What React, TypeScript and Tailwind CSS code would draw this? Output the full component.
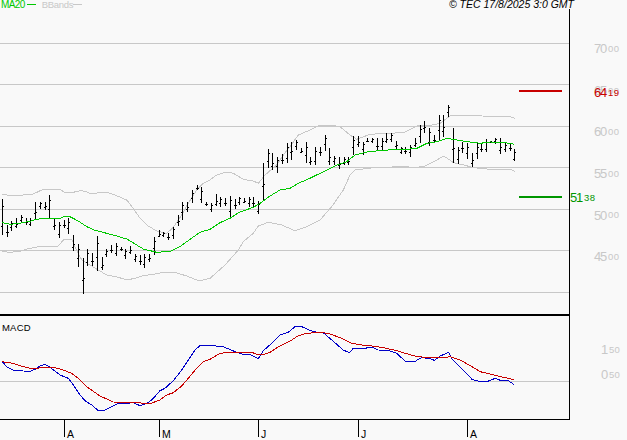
import React from "react";

type Pt = [number, number];

// all chart points were read off 3x crops, so they are stored as crop coords
const fromCrop = (ox: number, oy: number, pts: Pt[]): Pt[] =>
  pts.map(([x, y]) => [ox + x / 3, oy + y / 3]);

const toLine = (pts: Pt[]) => pts.map(([x, y]) => `${x.toFixed(1)},${y.toFixed(1)}`).join(" ");

const MAIN_TOP = 9;
const MACD_TOP = 316;

const gridYs = [43, 84, 126, 167, 209, 250, 292];

const ma20: Pt[] = [
  ...fromCrop(0, 150, [[7,218],[30,223],[60,220],[90,214],[110,208],[130,205],[180,205],[195,199],[210,200],[235,213],[260,230],[285,241],[320,250],[350,258],[380,267],[410,285],[430,297],[470,307],[510,304],[540,290],[570,268],[600,247],[630,238]]),
  ...fromCrop(210, 100, [[30,368],[60,355],[85,338],[130,322],[150,310],[180,288],[210,270],[240,265],[265,250],[300,235],[340,215],[380,195],[410,185],[435,165],[475,155],[510,152],[570,147],[600,147]]),
  ...fromCrop(417, 100, [[0,145],[30,130],[60,125],[90,115],[120,120],[150,125],[190,130],[220,126],[260,127],[292,133]]),
];

const upperBand: Pt[] = [
  ...fromCrop(0, 150, [[7,133],[40,138],[70,135],[100,132],[125,120],[150,118],[180,118],[195,128],[215,128],[240,122],[255,124],[275,132],[295,128],[325,128],[345,135],[380,150],[400,175],[420,205],[445,228],[470,243],[500,250],[520,232],[545,195],[565,160],[590,120],[610,100],[630,90]]),
  ...fromCrop(210, 100, [[20,225],[50,216],[70,220],[100,238],[130,243],[145,250],[165,225],[200,195],[220,165],[240,140],[265,105],[300,90],[330,75],[360,75],[390,80],[420,105],[440,118],[480,103],[530,100],[580,98]]),
  ...fromCrop(417, 100, [[0,78],[45,75],[70,70],[100,47],[150,47],[175,45],[195,48],[280,50],[293,55]]),
];

const lowerBand: Pt[] = [
  ...fromCrop(0, 150, [[0,302],[25,307],[55,305],[85,296],[115,290],[175,288],[190,270],[215,268],[225,290],[245,330],[270,345],[295,360],[320,375],[355,382],[380,390],[405,385],[430,377],[465,372],[490,367],[525,367],[560,378],[590,390],[610,390],[630,385]]),
  ...fromCrop(210, 100, [[45,495],[85,450],[100,425],[130,400],[145,378],[175,367],[215,375],[255,392],[290,380],[330,360],[365,320],[400,270],[420,225],[435,210],[490,203],[570,200]]),
  ...fromCrop(417, 100, [[0,202],[25,198],[50,185],[80,168],[110,188],[140,195],[170,203],[220,208],[280,208],[293,214]]),
];

const macdBlue: Pt[] = [
  ...fromCrop(0, 310, [[7,155],[20,170],[40,180],[70,183],[90,184],[105,178],[120,168],[135,163],[150,172],[165,183],[180,195],[205,205],[220,225],[240,255],[255,272],[275,285],[295,302],[310,303],[330,293],[350,282],[380,280],[400,278],[420,287],[445,278],[460,265],[480,242],[495,235],[520,212],[545,180],[565,150],[585,120],[600,107],[630,107]]),
  ...fromCrop(210, 310, [[35,109],[55,116],[75,125],[100,133],[120,133],[145,146],[160,122],[185,100],[210,75],[235,67],[255,50],[275,50],[310,65],[340,68],[365,90],[400,120],[418,128],[430,115],[465,115],[485,111],[505,120],[535,121],[560,130],[585,153],[615,155]]),
  ...fromCrop(417, 310, [[0,150],[15,143],[35,145],[52,151],[70,138],[95,127],[105,148],[130,172],[165,208],[185,214],[212,214],[235,205],[250,211],[272,211],[292,224]]),
];

const macdRed: Pt[] = [
  ...fromCrop(0, 310, [[7,155],[40,160],[70,170],[100,177],[130,172],[160,172],[190,180],[215,190],[235,205],[260,230],[300,258],[340,276],[410,278],[450,281],[480,270],[500,255],[520,248],[545,228],[565,205],[590,175],[610,155],[630,148]]),
  ...fromCrop(210, 310, [[30,130],[60,127],[125,127],[140,133],[165,132],[180,127],[205,110],[245,90],[265,77],[285,71],[320,67],[355,70],[390,83],[425,100],[455,105],[480,107],[520,113],[560,122],[590,131]]),
  ...fromCrop(417, 310, [[0,140],[30,142],[85,142],[100,140],[130,150],[165,170],[190,185],[230,195],[260,202],[292,209]]),
];

// high / low of each daily bar, in crop coords, one list per crop
const barsA: Pt[] = [[148,255],[225,262],[213,242],[205,235],[196,220],[205,225],[205,228],[155,210],[155,177],[155,178],[135,205],[205,242],[215,263],[210,235],[205,253],[255,302],[282,350],[325,433],[298,350],[310,350],[257,362],[322,362],[297,322],[285,310],[280,318],[290,302],[297,327],[288,312],[312,335],[315,345],[312,353],[312,335],[262,315],[240,262],[245,260],[250,270],[230,265],[195,228],[155,208],[155,185],[120,160],[105,120],[112,160],[155,168]];
const barsB: Pt[] = [[310,338],[283,320],[290,320],[295,318],[287,350],[298,328],[290,315],[295,310],[292,322],[290,322],[303,342],[190,302],[148,205],[160,210],[170,218],[163,192],[128,188],[125,178],[120,150],[145,160],[127,190],[170,195],[142,197],[140,168],[105,152],[143,195],[168,195],[172,208],[172,195],[170,195],[108,165],[108,140],[125,163],[115,128],[113,128],[115,155],[115,155],[100,130],[100,128],[123,147],[140,160],[142,162],[135,170]];
const barsC: Pt[] = [[115,143],[75,130],[62,98],[85,140],[105,130],[45,120],[45,110],[15,50],[85,190],[140,190],[125,158],[130,178],[158,200],[130,178],[133,158],[118,158],[123,130],[113,130],[115,163],[130,158],[130,155],[148,185]];

const bars = [
  ...barsA.map(([h, l]) => [150 + h / 3, 150 + l / 3]),
  ...barsB.map(([h, l]) => [100 + h / 3, 100 + l / 3]),
  ...barsC.map(([h, l]) => [100 + h / 3, 100 + l / 3]),
];

const ticks = [
  { x: 64, label: "A" },
  { x: 159, label: "M" },
  { x: 258, label: "J" },
  { x: 358, label: "J" },
  { x: 467, label: "A" },
];

const PriceLabel = ({ big, small, className = "text-[#c8c8c8]" }: { big: string; small: string; className?: string }) => (
  <span className={`flex items-center leading-none ${className}`}>
    <span className="text-[13px] leading-none tracking-[-1.2px]">{big}</span>
    <span className="ml-[2px] text-[9.5px] leading-none tracking-[0.3px]">{small}</span>
  </span>
);

export default function App() {
  return (
    <div
      className="relative flex h-[440px] w-[627px] flex-col overflow-hidden bg-[#f9f9f9]"
      style={{ fontFamily: '"Liberation Sans", Arial, sans-serif' }}
    >
      {/* legend + copyright row */}
      <div className="flex h-[9px] w-[574px] items-center text-[10px] leading-[9px]">
        <span className="ml-px tracking-[-0.6px] text-[#00c800]">MA20</span>
        <span className="ml-[2px] h-px w-[9px] bg-[#00c800]" />
        <span className="ml-[6px] text-[9.5px] tracking-[-0.3px] text-[#c8c8c8]">BBands</span>
        <span className="h-px w-[9px] bg-[#c8c8c8]" />
        <span className="ml-auto whitespace-nowrap text-[10.5px] italic text-black">© TEC 17/8/2025 3:0 GMT</span>
      </div>

      {/* price panel */}
      <div className="relative flex h-[305px]">
        <div className="w-[570px] border-r border-black">
          <svg width="569" height="305" viewBox={`0 ${MAIN_TOP} 569 305`} className="block">
            {gridYs.map((y) => (
              <rect key={y} x="0" y={y} width="569" height="1" fill="#c8c8c8" />
            ))}
            <polyline points={toLine(upperBand)} fill="none" stroke="#c8c8c8" strokeWidth="1" shapeRendering="crispEdges" />
            <polyline points={toLine(lowerBand)} fill="none" stroke="#c8c8c8" strokeWidth="1" shapeRendering="crispEdges" />
            {bars.map(([hi, lo], i) => {
              const x = Math.round(2 + i * 4.745);
              const open = Math.round(lo - (lo - hi) * (i % 3 === 0 ? 0.25 : 0.4));
              const close = Math.round(hi + (lo - hi) * (i % 2 === 0 ? 0.2 : 0.55));
              return (
                <g key={i} fill="#000" shapeRendering="crispEdges">
                  <rect x={x} y={Math.round(hi)} width="1" height={Math.max(2, Math.round(lo - hi))} />
                  <rect x={x - 1} y={open} width="1" height="1" />
                  <rect x={x + 1} y={close} width="1" height="1" />
                </g>
              );
            })}
            <polyline points={toLine(ma20)} fill="none" stroke="#00c800" strokeWidth="1" shapeRendering="crispEdges" />
            <rect x="519" y="90" width="43" height="2" fill="#c80000" />
            <rect x="519" y="196" width="43" height="2" fill="#009600" />
          </svg>
        </div>
        <div className="flex flex-1 flex-col pl-[24px] pt-[19px]">
          {["70|00", "65|00", "60|00", "55|00", "50|00", "45|00"].map((v) => {
            const [big, small] = v.split("|");
            return (
              <div key={v} className="flex h-[41.6px] items-center">
                <PriceLabel big={big} small={small} />
              </div>
            );
          })}
        </div>
        {/* target levels sit over the axis */}
        <div className="absolute left-[594px] top-[77px]">
          <PriceLabel big="64" small="19" className="text-[#c80000]" />
        </div>
        <div className="absolute left-[570px] top-[182px]">
          <PriceLabel big="51" small="38" className="text-[#009600]" />
        </div>
      </div>

      <div className="h-[2px] w-[570px] bg-black" />

      {/* MACD panel */}
      <div className="flex h-[103px]">
        <div className="relative w-[570px] border-r border-black">
          <span className="absolute left-[2px] top-[7px] text-[9.5px] leading-none tracking-[0.2px] text-black">MACD</span>
          <svg width="569" height="103" viewBox={`0 ${MACD_TOP} 569 103`} className="block">
            <rect x="0" y="381" width="569" height="1" fill="#c8c8c8" />
            <polyline points={toLine(macdBlue)} fill="none" stroke="#0000c8" strokeWidth="1" shapeRendering="crispEdges" />
            <polyline points={toLine(macdRed)} fill="none" stroke="#c80000" strokeWidth="1" shapeRendering="crispEdges" />
          </svg>
        </div>
        <div className="flex flex-1 flex-col pl-[31px] pt-[21px]">
          <div className="flex h-[25px] items-center">
            <PriceLabel big="1" small="50" />
          </div>
          <div className="flex h-[25px] items-center">
            <PriceLabel big="0" small="50" />
          </div>
        </div>
      </div>

      <div className="h-px w-[570px] bg-black" />

      {/* month axis */}
      <div className="relative h-[20px] w-[570px]">
        {ticks.map((t) => (
          <div key={t.x} className="absolute top-0 flex h-[17px] items-end" style={{ left: t.x }}>
            <span className="h-full w-px bg-black" />
            <span className="ml-[2px] translate-y-[2px] text-[10.5px] leading-none text-black">{t.label}</span>
          </div>
        ))}
      </div>
    </div>
  );
}
